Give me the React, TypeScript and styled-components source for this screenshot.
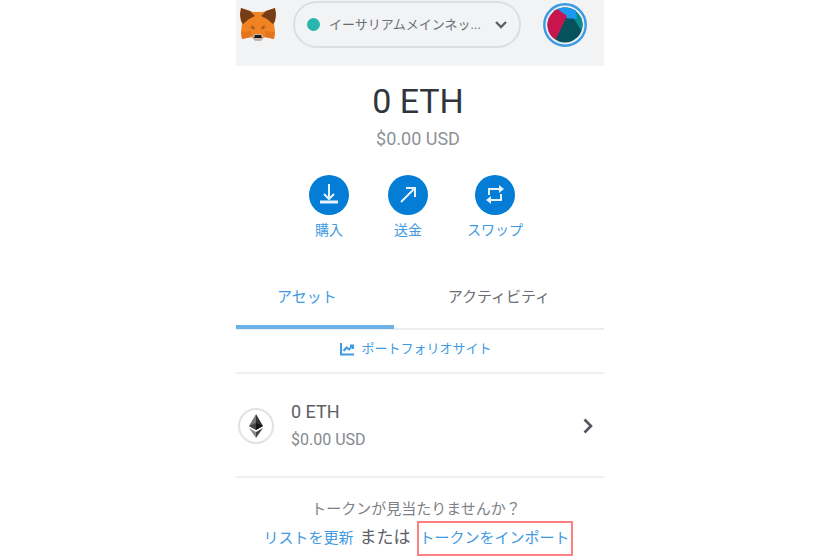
import React from "react";
import styled, { createGlobalStyle } from "styled-components";

const GlobalStyle = createGlobalStyle`
  *, *::before, *::after { box-sizing: border-box; }
  body {
    margin: 0;
    background: #fff;
    color: #6a737d;
    font-family: Roboto, "Noto Sans CJK JP", sans-serif;
  }
  button { font: inherit; color: inherit; background: none; border: 0; padding: 0; cursor: pointer; }
  a { color: #3f9ae2; text-decoration: none; }
  svg { display: block; flex: none; }
`;

const Wallet = styled.div`
  max-width: 368px;
  margin: 0 auto;
`;

const Header = styled.header`
  display: flex;
  align-items: center;
  gap: 17px;
  padding: 1px 17px 18px 4px;
  background: #f2f3f5;
`;

const NetworkButton = styled.button`
  display: flex;
  align-items: center;
  height: 47px;
  padding: 0 12px;
  border: 2px solid #dcdee3;
  border-radius: 24px;
  font-size: 13px;
  line-height: 20px;
  color: #6a6e73;
`;

const StatusDot = styled.span`
  width: 13px;
  height: 13px;
  margin-right: 9px;
  border-radius: 50%;
  background: #29b6af;
`;

const NetworkName = styled.span`
  margin-right: 14px;
`;

const AccountButton = styled.button`
  margin-left: auto;
  border-radius: 50%;
`;

const Balance = styled.section`
  padding: 15px 4px 0 0;
  text-align: center;
`;

const Amount = styled.h1`
  margin: 0 0 6px;
  font-size: 34px;
  line-height: 40px;
  font-weight: 400;
  color: #30363c;
`;

const FiatAmount = styled.p`
  margin: 0;
  font-size: 18px;
  line-height: 24px;
  color: #8e9297;
`;

const Actions = styled.div`
  display: flex;
  justify-content: center;
  gap: 39px;
  padding: 24px 8px 0 0;
`;

const Action = styled.button`
  display: flex;
  flex-direction: column;
  align-items: center;
  gap: 5px;
  font-size: 14px;
  line-height: 20px;
  color: #3f9ae2;
`;

const ActionIcon = styled.span`
  display: grid;
  place-items: center;
  width: 40px;
  height: 40px;
  border-radius: 50%;
  background: #037dd6;
`;

const Tabs = styled.div`
  display: grid;
  grid-template-columns: 3fr 4fr;
  margin-top: 45px;
  border-bottom: 2px solid #ededee;
`;

const Tab = styled.button<{ $active?: boolean }>`
  margin-bottom: -1px;
  padding: 0 ${(p) => (p.$active ? 16 : 0)}px 16px 0;
  border-bottom: 4px solid ${(p) => (p.$active ? "#6cb2e6" : "transparent")};
  font-size: 15px;
  line-height: 24px;
  color: ${(p) => (p.$active ? "#3f9ae2" : "#6a6e73")};
`;

const Portfolio = styled.div`
  display: flex;
  justify-content: center;
  padding: 9px 8px 13px 0;
  border-bottom: 2px solid #f0f0f1;
`;

const PortfolioLink = styled.a`
  display: flex;
  align-items: center;
  gap: 6px;
  font-size: 13px;
  line-height: 20px;
`;

const AssetRow = styled.button`
  display: flex;
  align-items: center;
  width: 100%;
  padding: 24px 11px 22px 2px;
  border-bottom: 2px solid #eff2f3;
  text-align: left;
  line-height: 28px;
`;

const TokenBadge = styled.span`
  display: grid;
  place-items: center;
  width: 36px;
  height: 36px;
  margin-right: 17px;
  border: 2px solid #e0e2e6;
  border-radius: 50%;
`;

const AssetText = styled.span`
  flex: 1;
  display: flex;
  flex-direction: column;
`;

const AssetAmount = styled.span`
  font-size: 18px;
  color: #5c6066;
`;

const AssetFiat = styled.span`
  font-size: 16px;
  color: #85898e;
`;

const Footer = styled.footer`
  padding: 19px 4px 4px 0;
  font-size: 15px;
  text-align: center;
`;

const Question = styled.p`
  margin: 0;
  padding-right: 4px;
  line-height: 24px;
  color: #7d8187;
`;

const Links = styled.div`
  display: flex;
  justify-content: center;
  align-items: baseline;
  gap: 6px;
`;

const Or = styled.span`
  font-size: 17px;
  color: #5c6066;
`;

const ImportLink = styled.a`
  padding: 0 1px;
  border: 2px solid #ff8080;
  line-height: 31px;
`;

const Fox = () => (
  <svg width="36" height="34" viewBox="0 0 36 34" aria-label="MetaMask" role="img">
    <path d="M1 0 13 4H23L35 0 36 8 34 16 35 24 34 31 25 29 21 32H15L11 29 2 31 1 24 2 16 0 8Z" fill="#f08322" />
    <path d="M1 0 10 3 15 8 9 11 3 16 1 13 0 6Z M35 0 26 3 21 8 27 11 33 16 35 13 36 6Z" fill="#773d17" />
    <path d="M1 24 11 23 11 29 2 31ZM35 24 25 23 25 29 34 31Z" fill="#e4751f" />
    <path d="M12 16 15 19 15 22 9 20ZM24 16 21 19 21 22 27 20Z" fill="#df7222" />
    <path d="M11 18 15 20 13 21ZM25 18 21 20 23 21Z" fill="#8a4f30" />
    <path d="M12 29 15 26H21L24 29 21 33H15Z" fill="#c9b3a6" />
    <path d="M15 27H21L22 30H14Z" fill="#1f1c20" />
  </svg>
);

const Avatar = () => (
  <svg width="44" height="44" viewBox="0 0 44 44" aria-hidden="true">
    <defs>
      <clipPath id="avatar">
        <circle cx="22" cy="22" r="17.5" />
      </clipPath>
    </defs>
    <circle cx="22" cy="22" r="20.7" fill="#e9eff4" stroke="#3c9ae3" strokeWidth="2.4" />
    <g clipPath="url(#avatar)">
      <path d="M0 0H44V44H0Z" fill="#05525c" />
      <path d="M30 8 44 6V30L38 27 31 16Z" fill="#078d8c" />
      <path d="M13 0H32L34 16 22 15 14 6Z" fill="#1c98f0" />
      <path d="M0 0 13 5 24 13 12 38 0 40Z" fill="#c9154f" />
    </g>
  </svg>
);

const iconStroke = { fill: "none", stroke: "#e6f3fc", strokeWidth: 2 };

const BuyIcon = () => (
  <svg width="20" height="22" viewBox="0 0 20 22" aria-hidden="true" {...iconStroke}>
    <path d="M10 0V14M5 10 10 15 15 10" />
    <path d="M1 18H19" strokeWidth="3" />
  </svg>
);

const SendIcon = () => (
  <svg width="18" height="18" viewBox="0 0 18 18" aria-hidden="true" {...iconStroke}>
    <path d="M2 16 16 2M7 2H16V11" />
  </svg>
);

const SwapIcon = () => (
  <svg width="20" height="20" viewBox="0 0 20 20" aria-hidden="true" {...iconStroke}>
    <path d="M4 10V4H15M16 9V15H5" />
    <path d="M14 0 19 4 14 8ZM6 11 1 15 6 19Z" fill="#e6f3fc" stroke="none" />
  </svg>
);

const ChartIcon = () => (
  <svg width="15" height="13" viewBox="0 0 15 13" fill="none" stroke="#3f9ae2" strokeWidth="2" aria-hidden="true">
    <path d="M1 0V11.5H14" />
    <path d="M3.5 8 6.5 4.5 9 6.5 13 2.5M10 2.5H13V6" />
  </svg>
);

const EthIcon = () => (
  <svg width="16" height="24" viewBox="0 0 16 24" aria-hidden="true">
    <path d="M8 0 1 12 8 16Z" fill="#777" />
    <path d="M8 0 15 12 8 16Z" fill="#333" />
    <path d="M1 12 8 9V16Z" fill="#444" />
    <path d="M15 12 8 9V16Z" fill="#151515" />
    <path d="M1 14 8 18V24Z" fill="#8a8a8a" />
    <path d="M15 14 8 18V24Z" fill="#444" />
  </svg>
);

export default function App() {
  return (
    <>
      <GlobalStyle />
      <Wallet>
        <Header>
          <Fox />
          <NetworkButton>
            <StatusDot />
            <NetworkName>イーサリアムメインネッ...</NetworkName>
            <svg width="12" height="8" viewBox="0 0 12 8" fill="none" stroke="#5c6066" strokeWidth="2.4" aria-hidden="true">
              <path d="M1 1 6 6 11 1" />
            </svg>
          </NetworkButton>
          <AccountButton aria-label="アカウント">
            <Avatar />
          </AccountButton>
        </Header>
        <main>
          <Balance>
            <Amount>0 ETH</Amount>
            <FiatAmount>$0.00 USD</FiatAmount>
          </Balance>
          <Actions>
            <Action>
              <ActionIcon><BuyIcon /></ActionIcon>
              購入
            </Action>
            <Action>
              <ActionIcon><SendIcon /></ActionIcon>
              送金
            </Action>
            <Action>
              <ActionIcon><SwapIcon /></ActionIcon>
              スワップ
            </Action>
          </Actions>
          <Tabs role="tablist">
            <Tab role="tab" aria-selected="true" $active>アセット</Tab>
            <Tab role="tab" aria-selected="false">アクティビティ</Tab>
          </Tabs>
          <Portfolio>
            <PortfolioLink href="#portfolio">
              <ChartIcon />
              ポートフォリオサイト
            </PortfolioLink>
          </Portfolio>
          <AssetRow>
            <TokenBadge><EthIcon /></TokenBadge>
            <AssetText>
              <AssetAmount>0 ETH</AssetAmount>
              <AssetFiat>$0.00 USD</AssetFiat>
            </AssetText>
            <svg width="10" height="16" viewBox="0 0 10 16" fill="none" stroke="#50565c" strokeWidth="2.6" aria-hidden="true">
              <path d="M1.5 1.5 8 8 1.5 14.5" />
            </svg>
          </AssetRow>
        </main>
        <Footer>
          <Question>トークンが見当たりませんか？</Question>
          <Links>
            <a href="#refresh">リストを更新</a>
            <Or>または</Or>
            <ImportLink href="#import">トークンをインポート</ImportLink>
          </Links>
        </Footer>
      </Wallet>
    </>
  );
}
